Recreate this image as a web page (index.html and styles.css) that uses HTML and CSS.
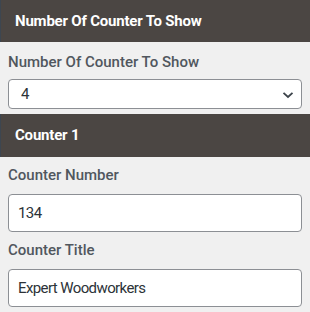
FILE: index.html
```html
<!DOCTYPE html>
<html lang="en">
<head>
    <meta charset="UTF-8">
    <meta name="viewport" content="width=device-width, initial-scale=1.0">
    <title>Counter Settings</title>
    <link rel="stylesheet" href="styles.css">
</head>
<body>
    <div class="panel">
        <h2 class="section-title">Number Of Counter To Show</h2>
        <div class="field field-first">
            <label for="counter_count">Number Of Counter To Show</label>
            <div class="select-wrap">
                <select id="counter_count">
                    <option value="1">1</option>
                    <option value="2">2</option>
                    <option value="3">3</option>
                    <option value="4" selected>4</option>
                </select>
                <svg class="chevron" width="12" height="8" viewBox="0 0 12 8">
                    <path d="M1.5 1.8 L6 6 L10.5 1.8" fill="none" stroke="#3c434a" stroke-width="1.8"/>
                </svg>
            </div>
        </div>

        <h2 class="section-title section-gap">Counter 1</h2>
        <div class="field">
            <label for="counter_number">Counter Number</label>
            <input type="text" id="counter_number" value="134">
        </div>
        <div class="field">
            <label for="counter_title">Counter Title</label>
            <input type="text" id="counter_title" value="Expert Woodworkers">
        </div>
    </div>
</body>
</html>
```
FILE: styles.css
```css
body {
    margin: 0;
    background: #f0f0f0;
    font-family: Roboto, "Liberation Sans", sans-serif;
}

.section-title {
    margin: 0;
    height: 42px;
    line-height: 42px;
    padding: 0 14px;
    background: #4b4643;
    border-left: 1px solid #3d4650;
    color: #fff;
    font-size: 15px;
    font-weight: 700;
    letter-spacing: -0.2px;
}

.section-gap {
    margin-top: 5px;
    height: 43px;
}

.field {
    padding: 8px 8px 0 8px;
}

.field-first {
    padding-top: 10px;
}

.field label {
    display: block;
    font-size: 15px;
    line-height: 20px;
    font-weight: 500;
    color: #50575e;
    margin-bottom: 9px;
}

.field-first label {
    margin-bottom: 7px;
}

.select-wrap {
    position: relative;
}

select,
input {
    box-sizing: border-box;
    width: 100%;
    border: 1px solid #8c8f94;
    border-radius: 4px;
    background: #fff;
    color: #2c3338;
    font-family: Roboto, "Liberation Sans", sans-serif;
    font-size: 15px;
    letter-spacing: -0.6px;
    margin: 0;
}

select {
    appearance: none;
    -webkit-appearance: none;
    height: 30px;
    padding: 0 24px 0 12px;
}

.chevron {
    position: absolute;
    right: 8px;
    top: 12px;
}

input {
    height: 38px;
    padding: 0 9px;
}
```
